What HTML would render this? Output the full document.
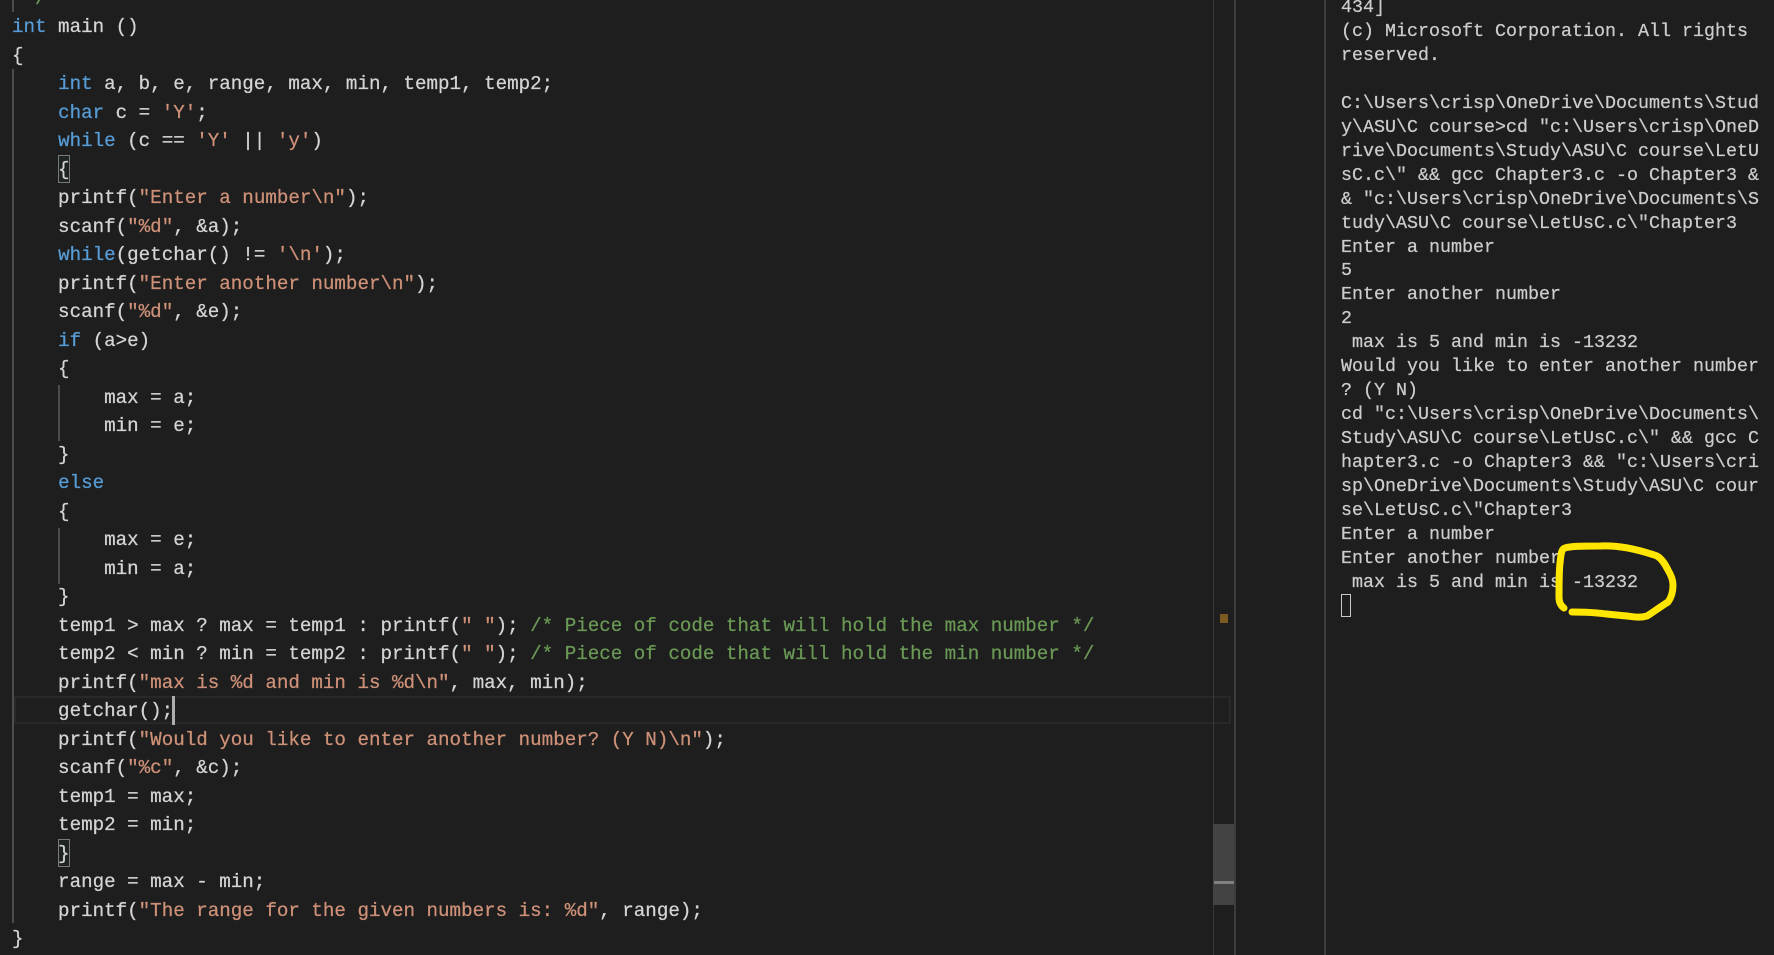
<!DOCTYPE html>
<html>
<head>
<meta charset="utf-8">
<style>
html,body{margin:0;padding:0;background:#1e1e1e;width:1774px;height:955px;overflow:hidden}
.b{position:absolute}
pre{margin:0;position:absolute;font-family:"Liberation Mono",monospace;white-space:pre;-webkit-text-stroke:0.25px currentColor}
#code{left:12px;top:-15.5px;font-size:19.2px;line-height:28.5px;color:#d4d4d4}
#term{left:1341px;top:-4px;font-size:18.33px;line-height:23.95px;color:#cccccc}
.k{color:#569cd6}.s{color:#ce9178}.c{color:#6a9955}
</style>
</head>
<body>
<div class="b" style="left:14px;top:696px;width:1213px;height:24px;border:2.5px solid #282828"></div>
<div class="b" style="left:12px;top:0;width:2px;height:12px;background:#4c4c4c"></div>
<div class="b" style="left:12px;top:69px;width:2px;height:854px;background:#4c4c4c"></div>
<div class="b" style="left:58px;top:385px;width:2px;height:56px;background:#4c4c4c"></div>
<div class="b" style="left:58px;top:528px;width:2px;height:56px;background:#4c4c4c"></div>
<div class="b" style="left:58px;top:155px;width:10px;height:26px;border:1px solid #7a7a7a;background:#1e241f"></div>
<div class="b" style="left:58px;top:839px;width:10px;height:26px;border:1px solid #7a7a7a;background:#1e241f"></div>
<pre id="code"><span class="c"> */</span>
<span class="k">int</span> main ()
{
    <span class="k">int</span> a, b, e, range, max, min, temp1, temp2;
    <span class="k">char</span> c = <span class="s">'Y'</span>;
    <span class="k">while</span> (c == <span class="s">'Y'</span> || <span class="s">'y'</span>)
    {
    printf(<span class="s">"Enter a number\n"</span>);
    scanf(<span class="s">"%d"</span>, &amp;a);
    <span class="k">while</span>(getchar() != <span class="s">'\n'</span>);
    printf(<span class="s">"Enter another number\n"</span>);
    scanf(<span class="s">"%d"</span>, &amp;e);
    <span class="k">if</span> (a&gt;e)
    {
        max = a;
        min = e;
    }
    <span class="k">else</span>
    {
        max = e;
        min = a;
    }
    temp1 &gt; max ? max = temp1 : printf(<span class="s">" "</span>); <span class="c">/* Piece of code that will hold the max number */</span>
    temp2 &lt; min ? min = temp2 : printf(<span class="s">" "</span>); <span class="c">/* Piece of code that will hold the min number */</span>
    printf(<span class="s">"max is %d and min is %d\n"</span>, max, min);
    getchar();
    printf(<span class="s">"Would you like to enter another number? (Y N)\n"</span>);
    scanf(<span class="s">"%c"</span>, &amp;c);
    temp1 = max;
    temp2 = min;
    }
    range = max - min;
    printf(<span class="s">"The range for the given numbers is: %d"</span>, range);
}</pre>
<div class="b" style="left:172px;top:696px;width:3px;height:29px;background:#aeafad"></div>
<div class="b" style="left:1213px;top:0;width:1px;height:955px;background:#383838"></div>
<div class="b" style="left:1234px;top:0;width:2px;height:955px;background:#3c3c3c"></div>
<div class="b" style="left:1324px;top:0;width:2px;height:955px;background:#3c3c3c"></div>
<div class="b" style="left:1213px;top:824px;width:21px;height:81px;background:#434343"></div>
<div class="b" style="left:1214px;top:881px;width:20px;height:3px;background:#808080"></div>
<div class="b" style="left:1220px;top:614px;width:8px;height:9px;background:#7c5a1e"></div>
<pre id="term">434]
(c) Microsoft Corporation. All rights
reserved.

C:\Users\crisp\OneDrive\Documents\Stud
y\ASU\C course&gt;cd "c:\Users\crisp\OneD
rive\Documents\Study\ASU\C course\LetU
sC.c\" &amp;&amp; gcc Chapter3.c -o Chapter3 &amp;
&amp; "c:\Users\crisp\OneDrive\Documents\S
tudy\ASU\C course\LetUsC.c\"Chapter3
Enter a number
5
Enter another number
2
 max is 5 and min is -13232
Would you like to enter another number
? (Y N)
cd "c:\Users\crisp\OneDrive\Documents\
Study\ASU\C course\LetUsC.c\" &amp;&amp; gcc C
hapter3.c -o Chapter3 &amp;&amp; "c:\Users\cri
sp\OneDrive\Documents\Study\ASU\C cour
se\LetUsC.c\"Chapter3
Enter a number
Enter another number
 max is 5 and min is -13232</pre>
<div class="b" style="left:1341px;top:594px;width:8px;height:21px;border:1.5px solid #c8c8c8"></div>
<svg class="b" style="left:0;top:0" width="1774" height="955" viewBox="0 0 1774 955">
<path d="M1564 608 C1561 606 1559 602 1559 597 C1559 585 1559 572 1560 563 C1561 555 1561 549 1565 548 C1570 546 1585 546 1600 546 C1620 545 1640 550 1657 556 C1662 559 1665 564 1668 570 C1671 575 1673 580 1673 585 C1673 592 1671 598 1668 602 C1660 607 1652 613 1647 616 C1640 618 1635 617 1627 616 C1615 615 1607 614 1597 613 C1587 612 1580 612 1572 612" fill="none" stroke="#ffe600" stroke-width="7" stroke-linecap="round" stroke-linejoin="round"/>
</svg>
</body>
</html>
